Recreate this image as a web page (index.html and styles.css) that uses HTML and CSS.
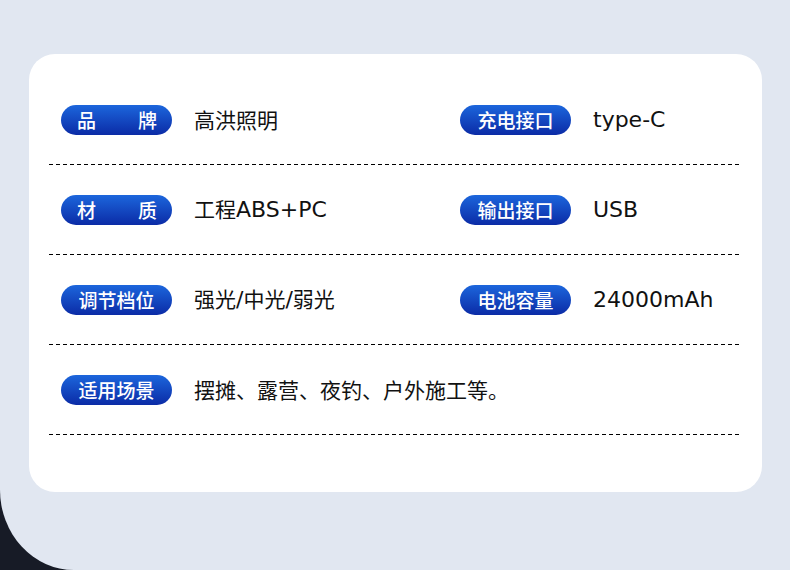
FILE: index.html
```html
<!DOCTYPE html>
<html lang="zh">
<head>
<meta charset="utf-8">
<link rel="stylesheet" href="styles.css">
</head>
<body>
<div class="panel">
  <div class="card">
    <div class="row">
      <div class="cell"><span class="pill spread"><span>品</span><span>牌</span></span><span class="val">高洪照明</span></div>
      <div class="cell"><span class="pill">充电接口</span><span class="val"><span class="lat">type-C</span></span></div>
    </div>
    <div class="row">
      <div class="cell"><span class="pill spread"><span>材</span><span>质</span></span><span class="val">工程<span class="lat">ABS+PC</span></span></div>
      <div class="cell"><span class="pill">输出接口</span><span class="val"><span class="lat">USB</span></span></div>
    </div>
    <div class="row">
      <div class="cell"><span class="pill">调节档位</span><span class="val">强光<span class="lat">/</span>中光<span class="lat">/</span>弱光</span></div>
      <div class="cell"><span class="pill">电池容量</span><span class="val"><span class="lat">24000mAh</span></span></div>
    </div>
    <div class="row">
      <div class="cell wide"><span class="pill">适用场景</span><span class="val">摆摊、露营、夜钓、户外施工等。</span></div>
    </div>
  </div>
</div>
</body>
</html>
```
FILE: styles.css
```css
html, body {
  margin: 0;
  padding: 0;
}
body {
  width: 790px;
  height: 570px;
  overflow: hidden;
  background: #171b26;
  font-family: "Noto Sans CJK SC", "Noto Sans", sans-serif;
}
.panel {
  width: 790px;
  height: 570px;
  background: #e1e7f1;
  border-bottom-left-radius: 74px 80px;
  padding: 54px 0 0 29px;
  box-sizing: border-box;
}
.card {
  width: 733px;
  height: 438px;
  background: #ffffff;
  border-radius: 26px;
  padding: 21px 20px 0 20px;
  box-sizing: border-box;
}
.row {
  height: 90px;
  display: grid;
  grid-template-columns: 399px 1fr;
  padding-left: 12px;
  box-sizing: border-box;
  align-items: center;
  background-image: repeating-linear-gradient(90deg, #000 0 4px, transparent 4px 7px);
  background-size: 697px 1px;
  background-repeat: no-repeat;
  background-position: 0 100%;
}
.cell {
  display: flex;
  align-items: center;
  gap: 22px;
}
.cell.wide {
  grid-column: 1 / 3;
}
.pill {
  width: 111px;
  height: 30px;
  border-radius: 15px;
  background: linear-gradient(180deg, #1c66dc 0%, #0b2ba6 100%);
  color: #ffffff;
  font-size: 19px;
  font-weight: 500;
  line-height: 30px;
  text-align: center;
  display: flex;
  justify-content: center;
  box-sizing: border-box;
  flex: none;
}
.pill.spread {
  justify-content: space-between;
  padding: 0 15px 0 16px;
}
.val {
  font-size: 21px;
  color: #111111;
  line-height: 30px;
  margin-top: -2px;
}
.lat {
  font-family: "DejaVu Sans", "Noto Sans", sans-serif;
  font-size: 22px;
}
```
